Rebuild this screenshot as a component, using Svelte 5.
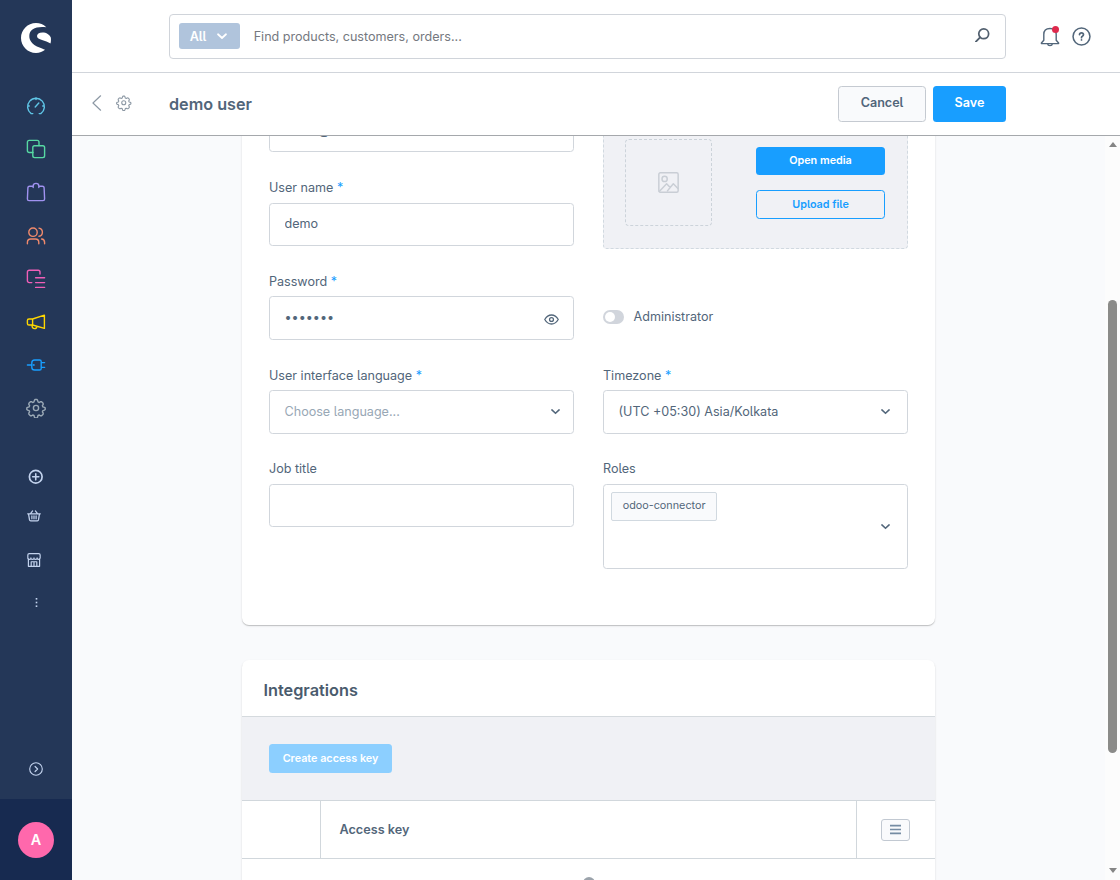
<script>
  let search = $state("");
  let username = $state("demo");
  let password = $state("secret1");
  let jobTitle = $state("");
  let isAdmin = $state(false);
  let showPassword = $state(false);

  const navigation = [
    { name: "Dashboard", icon: "gauge", color: "#5fc5e6" },
    { name: "Catalogues", icon: "products", color: "#57d9a3" },
    { name: "Orders", icon: "bag", color: "#a092f0" },
    { name: "Customers", icon: "users", color: "#f08a6c" },
    { name: "Content", icon: "content", color: "#f05fb8" },
    { name: "Marketing", icon: "megaphone", color: "#ffd700" },
    { name: "Extensions", icon: "plug", color: "#189eff" },
    { name: "Settings", icon: "gear", color: "#9aa8b5" }
  ];
</script>

{#snippet icon(name)}
  <svg class="icon" viewBox="0 0 20 20" fill="none" stroke="currentColor" stroke-width="1.4" stroke-linecap="round" stroke-linejoin="round">
    {#if name === "gauge"}
      <path d="M6.8 17.6H5.2A8.4 8.4 0 1 1 14.8 17.6H13.2M10 1.8v1.8M1.7 10h1.6M18.3 10h-1.6M9.2 11 12.8 7" />
    {:else if name === "products"}
      <path d="M7 13.5H3.2A1.8 1.8 0 0 1 1.4 11.7V3.2A1.8 1.8 0 0 1 3.2 1.4h8A1.8 1.8 0 0 1 13 3.2V6.5" />
      <rect x="6.8" y="6.8" width="11.8" height="11.8" rx="1.8" />
    {:else if name === "bag"}
      <path d="M7 4.2H3.6Q2 4.2 1.9 5.6L1.4 17Q1.4 18.6 3 18.6h14q1.6 0 1.6-1.6L18.1 5.6Q18 4.2 16.4 4.2H13M7.2 5.6V4q0-2.6 2.8-2.6T12.8 4v1.6" />
    {:else if name === "users"}
      <circle cx="7" cy="6.2" r="4.2" />
      <path d="M1.4 17.7v-1.2q0-3.5 3.4-3.5h4.6q3.4 0 3.4 3.5v1.2M13 2.1q3.4.7 3.4 4.1T13 10.3M15.6 13q3 .2 3 3.5v1.2" />
    {:else if name === "content"}
      <path d="M5.8 13.6H3.2a1.8 1.8 0 0 1-1.8-1.8V3a1.8 1.8 0 0 1 1.8-1.8h9A1.8 1.8 0 0 1 14 3v2M9.6 8.8h9M9.6 13.6h9M9.6 18.4h9" />
    {:else if name === "megaphone"}
      <path d="M6.6 7 18.4 3.2v13.2L6.6 13H3Q1.4 13 1.4 11.4V8.6Q1.4 7 3 7ZM6.6 7v6M6 13q0 3.6 2.6 3.6 2 0 2.4-2.3" />
    {:else if name === "plug"}
      <path d="M1.4 10h4.4M15.6 7.6h3M15.6 12.4h3M5.8 7.8q0-2.8 2.8-2.8h5q1.6 0 1.6 1.6v6.8q0 1.6-1.6 1.6h-5q-2.8 0-2.8-2.8Z" /><circle cx="7.7" cy="10" r=".4" />
    {:else if name === "gear"}
      <circle cx="10" cy="10" r="2.6" />
      <path d="m8.4 2.4.5-.9h2.2l.5.9.4 1.5 1.3.6 1.3-.8 1 .1 1.5 1.5.1 1-.8 1.4.5 1.2 1.5.5.8.5v1.6l-.8.6-1.5.5-.5 1.2.8 1.4-.1 1-1.5 1.5-1 .1-1.3-.8-1.3.5-.4 1.6-.5.8H8.9l-.5-.8-.4-1.6-1.3-.5-1.3.8-1-.1-1.5-1.5-.1-1 .8-1.4-.5-1.2-1.5-.5-.8-.6V9.9l.8-.5 1.5-.5.5-1.2-.8-1.4.1-1 1.5-1.5 1-.1 1.3.8L8 3.9Z" />
    {:else if name === "plus"}
      <circle cx="10" cy="10" r="8.2" stroke-width="2.2" /><path stroke-width="2" d="M10 6v8M6 10h8" />
    {:else if name === "basket"}
      <path stroke-width="1.8" d="M1 6.8h18M2.2 7l1.4 8.6q.3 1.4 1.6 1.4h9.6q1.3 0 1.6-1.4L17.8 7M5 6.6 8 2.8M15 6.6l-3-3.8M7 10v4M10 10v4M13 10v4" />
    {:else if name === "shop"}
      <path stroke-width="1.7" d="M2 8v11h16V8M1.2 7V3Q1.2 1 3.2 1h13.6q2 0 2 2v4q-.2 2.2-2.2 2.2T14.4 7q0 2.2-2.2 2.2T10 7q0 2.2-2.2 2.2T5.6 7q0 2.2-2.2 2.2T1.2 7ZM6 19v-6.5h8V19M10 12.5V19" />
    {:else if name === "dots"}
      <g fill="currentColor" stroke="none"><rect x="8.2" y="0" width="3.6" height="3.6" /><rect x="8.2" y="8.2" width="3.6" height="3.6" /><rect x="8.2" y="16.4" width="3.6" height="3.6" /></g>
    {:else if name === "expand"}
      <circle cx="10" cy="10" r="9" stroke-width="1.6" /><path stroke-width="1.7" d="m8.7 6.4 3.6 3.6-3.6 3.6" />
    {:else if name === "chevron"}
      <path stroke-width="3.5" d="m2 6.5 8 7.5 8-7.5" />
    {:else if name === "back"}
      <path stroke-width="1.3" d="M14 2 5.5 10l8.5 8" />
    {:else if name === "search"}
      <circle cx="12" cy="8" r="6.8" stroke-width="2.4" /><path stroke-width="2.6" d="M7 13 1.3 18.7" />
    {:else if name === "bell"}
      <path d="M1.4 16.5 3.8 13.7V8q0-6 6.2-6t6.2 6v5.7l2.4 2.8v.6H1.4ZM7.6 17.3q.3 1.8 2.4 1.8t2.4-1.8" />
    {:else if name === "help"}
      <circle cx="10" cy="10" r="8.9" stroke-width="1.6" /><path stroke-width="1.8" d="M7.9 8q.1-1.9 2.1-1.9T12.1 8q0 1.1-1.2 1.7-.9.4-.9 1.5M10 13.4v.2" />
    {:else if name === "eye"}
      <path stroke-width="1.7" d="M1 10q3.5-6 9-6t9 6q-3.5 6-9 6t-9-6Z" /><circle cx="10" cy="10" r="2.6" stroke-width="1.7" />
    {:else if name === "image"}
      <rect x=".8" y=".8" width="18.4" height="18.4" rx="1.4" /><circle cx="6.3" cy="6.6" r="2.5" /><path d="m1.2 18.6 7-7.4 3.4 3.6 3-3.6 4.4 4.6M9 18l2.6-3.2" />
    {:else if name === "list"}
      <path stroke-width="3" stroke-linecap="butt" d="M0 3h20M0 10h20M0 17h20" />
    {/if}
  </svg>
{/snippet}

<div class="admin">
  <aside class="sidebar">
    <svg class="logo" viewBox="0 0 30 30" fill="#fff">
      <path d="M25.3 4.2C22.4 1.3 19 0 15 0 6.6 0 0 6.8 0 15s6.7 15 15 15c3.7 0 6.7-1.2 9.1-3.2C20 24.7 8.3 22.5 8.3 13 8.3 5.7 15.5 3 25.3 4.2Z" />
      <path d="M29.5 20.6c.5-2 .6-4.2.3-6C28.6 11.6 25.5 9.5 21.4 9.5c-3.4 0-5.4 1.7-5.4 3.4 0 4.4 9 3.8 13.5 7.7Z" />
    </svg>
    <nav class="nav-main">
      {#each navigation as item (item.name)}
        <a href="#{item.icon}" aria-label={item.name} style:color={item.color}>{@render icon(item.icon)}</a>
      {/each}
    </nav>
    <nav class="nav-extra">
      <a class="plus" href="#add" aria-label="Add">{@render icon("plus")}</a>
      <a class="basket" href="#basket" aria-label="Basket">{@render icon("basket")}</a>
      <a class="shop" href="#shop" aria-label="Storefront">{@render icon("shop")}</a>
      <a class="more" href="#more" aria-label="More">{@render icon("dots")}</a>
    </nav>
    <button class="expand" aria-label="Expand menu">{@render icon("expand")}</button>
    <div class="account"><span class="avatar">A</span></div>
  </aside>

  <div class="main">
    <header class="topbar">
      <div class="search">
        <button class="scope">All {@render icon("chevron")}</button>
        <input aria-label="Search" placeholder="Find products, customers, orders..." bind:value={search} />
        <span class="search-icon">{@render icon("search")}</span>
      </div>
      <button class="bell" aria-label="Notifications">{@render icon("bell")}<span class="badge"></span></button>
      <button class="help" aria-label="Help">{@render icon("help")}</button>
    </header>

    <div class="page-head">
      <button class="back" aria-label="Back">{@render icon("back")}</button>
      <span class="head-gear">{@render icon("gear")}</span>
      <h1>demo user</h1>
      <button class="btn cancel">Cancel</button>
      <button class="btn primary save">Save</button>
    </div>

    <div class="viewport">
      <div class="content">
        <section class="card profile">
          <div class="column">
            <div class="box email">demo@demo.com</div>
            <div class="field">
              <label for="username">User name <b>*</b></label>
              <input id="username" class="box" bind:value={username} />
            </div>
            <div class="field">
              <label for="password">Password <b>*</b></label>
              <div class="box password">
                {#if showPassword}
                  <input id="password" type="text" bind:value={password} />
                {:else}
                  <input id="password" type="password" bind:value={password} />
                {/if}
                <button aria-label="Show password" onclick={() => showPassword = !showPassword}>{@render icon("eye")}</button>
              </div>
            </div>
            <div class="field">
              <span class="label">User interface language <b>*</b></span>
              <div class="box select placeholder"><span>Choose language...</span>{@render icon("chevron")}</div>
            </div>
            <div class="field">
              <label for="job">Job title</label>
              <input id="job" class="box" bind:value={jobTitle} />
            </div>
          </div>

          <div class="column">
            <div class="media">
              <div class="preview">{@render icon("image")}</div>
              <div class="media-actions">
                <button class="btn primary">Open media</button>
                <button class="btn outline">Upload file</button>
              </div>
            </div>
            <div class="toggle-row">
              <button class="toggle" class:on={isAdmin} aria-label="Administrator" onclick={() => isAdmin = !isAdmin}></button>
              <span>Administrator</span>
            </div>
            <div class="field">
              <span class="label">Timezone <b>*</b></span>
              <div class="box select"><span>(UTC +05:30) Asia/Kolkata</span>{@render icon("chevron")}</div>
            </div>
            <div class="field">
              <span class="label">Roles</span>
              <div class="box select roles"><span class="tag">odoo-connector</span>{@render icon("chevron")}</div>
            </div>
          </div>
        </section>

        <section class="card integrations">
          <h2>Integrations</h2>
          <div class="toolbar"><button class="btn primary create" disabled>Create access key</button></div>
          <div class="grid-head">
            <span></span>
            <strong>Access key</strong>
            <span class="cell"><button class="columns" aria-label="Columns">{@render icon("list")}</button></span>
          </div>
          <div class="loader"><span></span></div>
        </section>
      </div>
      <div class="scrollbar">
        <i class="up"></i>
        <i class="thumb"></i>
        <i class="down"></i>
      </div>
    </div>
  </div>
</div>

<style>
  :global(body) { background: #f9fafc; overflow: hidden; }
  * { box-sizing: border-box; }
  .admin {
    display: flex;
    height: 880px;
    overflow: hidden;
    font-family: Inter, "Liberation Sans", sans-serif;
    font-feature-settings: "cv05";
    font-size: 12.58px;
    color: #52667a;
  }
  button, input { font: inherit; font-feature-settings: inherit; color: inherit; letter-spacing: inherit; }
  button { display: flex; align-items: center; justify-content: center; padding: 0; border: 0; background: none; cursor: pointer; }
  input { min-width: 0; border: 0; outline: 0; padding: 0; background: none; }
  .icon { display: block; flex: none; width: 20px; height: 20px; }

  .sidebar { display: flex; flex-direction: column; width: 72px; flex: none; background: #243758; color: #c3d3ee; }
  .logo { width: 30px; height: 30px; margin: 23px 0 0 21px; flex: none; }
  .nav-main { display: flex; flex-direction: column; gap: 23.15px; align-items: center; margin-top: 43.1px; }
  .nav-main a { height: 20px; }
  .nav-extra { display: flex; flex-direction: column; padding-top: 51.2px; }
  .nav-extra a { color: inherit; }
  .nav-extra .icon { width: 14px; height: 14px; }
  .plus { margin-left: 28px; }
  .plus .icon { width: 15.5px; height: 15.5px; }
  .basket { margin: 24.3px 0 0 27px; }
  .shop { margin: 29.5px 0 0 27px; }
  .more { margin: 31px 0 0 32px; }
  .more .icon { width: 9px; height: 9px; }
  .expand { margin: auto 0 23px 29px; width: 14px; }
  .expand .icon { width: 14px; height: 14px; }
  .account { display: flex; justify-content: center; align-items: center; height: 81px; flex: none; background: #172a50; }
  .avatar { width: 36px; height: 36px; border-radius: 50%; background: #ff68ac; color: #fff; font-size: 14.4px; font-weight: 600; line-height: 36px; text-align: center; }

  .main { display: flex; flex-direction: column; flex: 1; min-width: 0; }
  .topbar { display: flex; align-items: center; height: 73px; flex: none; padding-left: 97px; background: #fff; border-bottom: 1px solid #d1d5db; }
  .search { display: flex; align-items: center; width: 837px; height: 45px; padding-left: 9px; border: 1px solid #d0d4da; border-radius: 4px; }
  .scope { width: 61px; height: 26px; gap: 11px; margin-top: -1px; padding: 1px 2px 0 0; border-radius: 3px; background: #b0c4dc; color: #fff; font-weight: 600; }
  .scope .icon { width: 10px; height: 10px; }
  .search input { flex: 1; margin-left: 13.7px; }
  .search input::placeholder { color: #75797f; opacity: 1; }
  .search-icon { margin: -2px 15.5px 0 0; color: #52606f; }
  .search-icon .icon { width: 14.5px; height: 14.5px; }
  .bell { position: relative; margin-left: 34px; }
  .badge { position: absolute; top: 0; right: 1px; width: 7.5px; height: 7.5px; border-radius: 50%; background: #de294c; }
  .help { margin: 1px 0 0 12px; }
  .bell .icon { height: 21px; }
  .help .icon { width: 19px; height: 19px; }

  .page-head { display: flex; align-items: center; height: 63px; flex: none; background: #fff; border-bottom: 1px solid #a5a8ac; }
  .back { margin: -2px 0 0 16px; color: #8c98a4; }
  .back .icon { width: 18px; height: 18px; }
  .head-gear { margin: -2px 0 0 10px; color: #8c98a4; }
  .head-gear .icon { width: 15.5px; height: 15.5px; }
  h1 { margin: 0 auto 0 37.5px; font-size: 16.2px; font-weight: 600; }
  .btn { border: 1px solid transparent; border-radius: 3.5px; font-weight: 600; }
  .cancel { width: 88px; height: 36px; padding-bottom: 3px; background: #f9fafc; border-color: #c5cad1; }
  .primary { background: #189eff; color: #fff; }
  .save { width: 73px; height: 36px; margin: 0 114px 0 7px; padding-bottom: 3px; }

  .viewport { display: flex; flex: 1; min-height: 0; overflow: hidden; }
  .content { flex: 1; margin-top: -54px; padding-left: 170px; }
  .card { width: 693px; background: #fff; border-radius: 7px; box-shadow: 0 1px 1px rgba(0, 0, 0, .2), 0 1px 3px rgba(0, 0, 0, .06); }
  .profile { display: flex; gap: 29px; height: 543px; padding: 27px 27px 0; }
  .column { width: 305px; }
  .box { display: flex; align-items: center; width: 305px; height: 43.5px; padding: 0 15px 2px 14.5px; border: 1px solid #d1d6dc; border-radius: 3.5px; background: #fff; }
  .email { height: 43.3px; padding-bottom: 0; }
  .field { padding-top: 26.8px; }
  label, .label { display: block; height: 23.5px; line-height: 18px; }
  b { color: #189eff; font-weight: 400; }
  .password { padding-bottom: 0; }
  .password input { flex: 1; margin-top: -1px; }
  .password button { margin-top: 3px; margin-right: -.5px; }
  .password .icon { width: 15px; height: 15px; }
  .select { justify-content: space-between; padding-bottom: 1px; }
  .select .icon { width: 9px; height: 9px; margin: 1px 2px 0 0; }
  .placeholder .icon { margin: 0 -2px 0 0; }
  .placeholder span { color: #98a7b5; }
  .roles { height: 85px; padding-left: 7px; }
  .roles .icon { margin-top: 2px; }
  .tag { align-self: flex-start; margin-top: 7px; padding: 0 10.7px 1px; border: 1px solid #d1d9e0; border-radius: 2px; background: #f9fafc; font-size: 10.8px; line-height: 26px; }
  .media { display: flex; justify-content: space-between; height: 140px; padding: 29px 22px 0 21px; border: 1px dashed #d1d9e0; border-radius: 4px; background: #f0f1f5; }
  .preview { display: flex; align-items: center; justify-content: center; width: 87px; height: 87px; border: 1px dashed #ccd3da; border-radius: 4px; color: #c9ced5; }
  .preview .icon { width: 21px; height: 21px; }
  .media-actions { padding-top: 8px; }
  .media-actions .btn { width: 129px; height: 28px; padding-bottom: 1px; font-size: 10.8px; }
  .media-actions .outline { height: 29px; margin-top: 15px; border-color: #189eff; color: #189eff; }
  .toggle-row { display: flex; gap: 9.5px; height: 90.8px; padding-top: 61px; line-height: 14px; }
  .toggle { width: 21px; height: 14px; padding: 2px; border-radius: 7px; background: #d1d5dc; justify-content: flex-start; }
  .toggle::before { content: ""; width: 10px; height: 10px; border-radius: 50%; background: #fff; }
  .toggle.on { background: #189eff; justify-content: flex-end; }

  .integrations { height: 300px; margin-top: 35px; }
  h2 { height: 57px; margin: 0; padding-left: 21.5px; border-bottom: 1px solid #d5dade; color: #4a5b6d; font-size: 16.3px; font-weight: 600; line-height: 60px; }
  .toolbar { height: 84px; padding: 27px; background: #f0f1f5; border-bottom: 1px solid #d1d7dc; }
  .create { width: 123px; height: 29px; padding-bottom: 1px; font-size: 10.8px; }
  .create:disabled { background: #8ccfff; cursor: default; }
  .grid-head { display: grid; grid-template-columns: 79px 536px 1fr; height: 58px; border-bottom: 1px solid #d1d7dc; line-height: 57px; }
  .grid-head > :not(:last-child) { border-right: 1px solid #d1d7dc; }
  strong { padding-left: 18.5px; font-size: 12.65px; font-weight: 600; }
  .cell { display: flex; align-items: center; justify-content: center; padding-right: 2px; }
  .columns { width: 29px; height: 22px; border: 1px solid #c2c9d2; border-radius: 3px; background: #f9fafc; color: #758ca3; }
  .columns .icon { width: 11px; height: 11px; }
  .loader { display: flex; justify-content: center; padding-top: 18px; }
  .loader span { width: 12px; height: 12px; border-radius: 50%; background: #9ba3ab; }

  .scrollbar { display: flex; flex-direction: column; align-items: center; width: 15px; background: #fcfcfc; }
  .scrollbar i { flex: none; }
  .up { margin-top: 6px; border: 4.5px solid transparent; border-top: 0; border-bottom: 5px solid #858585; }
  .thumb { width: 9px; height: 453px; margin-top: 153px; border-radius: 5px; background: #8b8b89; }
  .down { margin-top: 115px; border: 4.5px solid transparent; border-bottom: 0; border-top: 5px solid #858585; }
</style>
